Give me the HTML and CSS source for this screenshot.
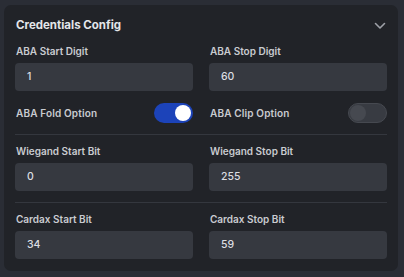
FILE: index.html
```html
<!DOCTYPE html>
<html>
<head>
<meta charset="utf-8">
<link rel="stylesheet" href="styles.css">
</head>
<body>
<div class="card">
  <div class="header">
    <div class="title">Credentials Config</div>
    <svg class="chevron" width="12" height="8" viewBox="0 0 12 8"><path d="M1.5 1.5 L6 6 L10.5 1.5" fill="none" stroke="#9ea1a8" stroke-width="1.6" stroke-linecap="round" stroke-linejoin="round"/></svg>
  </div>
  <div class="section first">
    <div class="grid">
      <div class="field"><div class="label">ABA Start Digit</div><div class="input">1</div></div>
      <div class="field"><div class="label">ABA Stop Digit</div><div class="input">60</div></div>
    </div>
    <div class="grid toggles">
      <div class="trow"><span class="tlabel">ABA Fold Option</span><span class="switch on"><span class="knob"></span></span></div>
      <div class="trow"><span class="tlabel">ABA Clip Option</span><span class="switch off"><span class="knob"></span></span></div>
    </div>
  </div>
  <div class="section">
    <div class="grid">
      <div class="field"><div class="label">Wiegand Start Bit</div><div class="input">0</div></div>
      <div class="field"><div class="label">Wiegand Stop Bit</div><div class="input">255</div></div>
    </div>
  </div>
  <div class="section last">
    <div class="grid">
      <div class="field"><div class="label">Cardax Start Bit</div><div class="input">34</div></div>
      <div class="field"><div class="label">Cardax Stop Bit</div><div class="input">59</div></div>
    </div>
  </div>
</div>
</body>
</html>
```

FILE: styles.css
```css
html, body {
  margin: 0;
  padding: 0;
  background: #2a2d35;
  font-family: Inter, "Noto Sans", sans-serif;
}
.card {
  margin: 5px 6px 0 4px;
  width: 394px;
  height: 266px;
  box-sizing: border-box;
  background: #212328;
  border-radius: 7px;
  padding: 12px 11px 11px 11px;
}
.header {
  display: flex;
  align-items: center;
  justify-content: space-between;
  height: 16px;
  margin-bottom: 11px;
}
.title {
  font-size: 11.5px;
  font-weight: 700;
  color: #e4e6ea;
  line-height: 16px;
  padding-left: 1px;
}
.chevron {
  margin-right: 1px;
  margin-top: 1px;
}
.grid {
  display: grid;
  grid-template-columns: 1fr 1fr;
  column-gap: 16px;
}
.label {
  font-size: 10px;
  font-weight: 600;
  color: #c9cbd0;
  line-height: 15px;
  margin-bottom: 4px;
  padding-left: 1px;
}
.input {
  height: 28px;
  background: #363940;
  border-radius: 4px;
  box-sizing: border-box;
  padding-left: 12px;
  font-size: 10.5px;
  font-weight: 500;
  color: #dcdee2;
  line-height: 28px;
}
.section {
  border-top: 1px solid #34373e;
  padding-top: 9px;
  padding-bottom: 11px;
}
.section.first {
  border-top: none;
  padding-top: 0;
  padding-bottom: 10px;
}
.section.last {
  padding-bottom: 0;
}
.toggles {
  margin-top: 11px;
}
.trow {
  display: flex;
  align-items: center;
  justify-content: space-between;
  height: 22px;
}
.tlabel {
  font-size: 10px;
  font-weight: 600;
  color: #c9cbd0;
  padding-left: 1px;
  letter-spacing: 0.15px;
}
.switch {
  width: 39px;
  height: 20px;
  border-radius: 10px;
  box-sizing: border-box;
  display: flex;
  align-items: center;
  padding: 0 2px;
}
.switch.on {
  background: #1c43b9;
  justify-content: flex-end;
}
.switch.off {
  background: #383b42;
  border: 1px solid #464950;
  justify-content: flex-start;
  padding: 0 1px;
}
.knob {
  width: 16px;
  height: 16px;
  border-radius: 50%;
}
.switch.on .knob {
  background: #ffffff;
}
.switch.off .knob {
  background: #464950;
}
```
